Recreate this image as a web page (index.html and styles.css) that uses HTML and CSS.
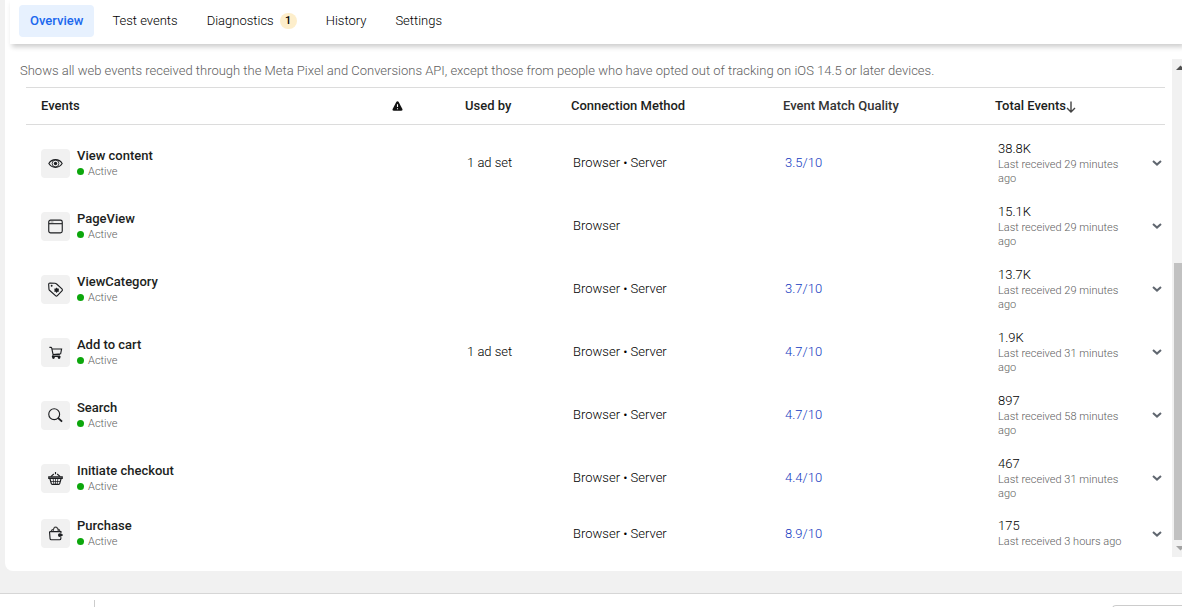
FILE: index.html
```html
<!DOCTYPE html>
<html lang="en">
<head>
  <meta charset="UTF-8">
  <meta name="viewport" content="width=device-width, initial-scale=1.0">
  <title>Events Manager</title>
  <link rel="stylesheet" href="styles.css">
</head>
<body>
  <main class="card">
    <nav class="tabs">
      <a class="tab active" href="#overview">Overview</a>
      <a class="tab" href="#test">Test events</a>
      <a class="tab" href="#diagnostics">Diagnostics <span class="count">1</span></a>
      <a class="tab" href="#history">History</a>
      <a class="tab" href="#settings">Settings</a>
    </nav>

    <div class="panel">
      <section class="content">
        <p class="intro">Shows all web events received through the Meta Pixel and Conversions API, except those from people who have opted out of tracking on iOS 14.5 or later devices.</p>
        <table class="events">
          <colgroup>
            <col>
            <col class="col-warning">
            <col class="col-used">
            <col class="col-method">
            <col class="col-quality">
            <col class="col-total">
            <col class="col-toggle">
          </colgroup>
          <thead>
            <tr>
              <th>Events</th>
              <th class="warning"><svg width="11" height="12" viewBox="0 0 12 12" aria-label="Warnings"><path d="M6 .8c.6 0 1 .3 1.300.8l4 7.600c.5 1-.1 1.900-1.200 1.900H1.900C.8 11.100.2 10.200.7 9.200l4-7.600C5 1.100 5.400.8 6 .8z" fill="#111"/><path d="M6 4v3.200M6 8.400v1.200" stroke="#fff" stroke-width="1.200"/></svg></th>
              <th>Used by</th>
              <th>Connection Method</th>
              <th class="soft">Event Match Quality</th>
              <th>Total Events<svg class="sort" width="10" height="12" viewBox="0 0 10 12"><path d="M5 .5v10.500M1 7l4 4 4-4" fill="none" stroke="#444" stroke-width="1.400"/></svg></th>
              <th></th>
            </tr>
          </thead>
          <tbody>
            <tr>
              <td><div class="event"><span class="icon"><svg viewBox="0 0 16 16"><path d="M.9 8C2.500 5.300 5 3.900 8 3.900s5.500 1.400 7.100 4.100c-1.600 2.700-4.100 4.100-7.100 4.100S2.500 10.700.9 8z"/><circle cx="8" cy="8" r="3.600" stroke-width=".9"/><circle class="dot" cx="8" cy="8" r="1.800"/></svg></span><div><div class="name">View content</div><div class="status">Active</div></div></div></td>
              <td></td>
              <td>1 ad set</td>
              <td>Browser • Server</td>
              <td><a href="#quality">3.5/10</a></td>
              <td class="received"><div>38.8K</div><div class="last">Last received 29 minutes ago</div></td>
              <td class="toggle"><button type="button" aria-label="Expand View content"><svg viewBox="0 0 12 8"><path d="M2 2l4 3.600L10 2"/></svg></button></td>
            </tr>
            <tr>
              <td><div class="event"><span class="icon"><svg viewBox="0 0 16 16"><rect x=".8" y="1.200" width="14.400" height="13.600" rx="2"/><path d="M1 5h14"/><path d="M2.800 3.200h3" stroke="#999"/></svg></span><div><div class="name">PageView</div><div class="status">Active</div></div></div></td>
              <td></td>
              <td></td>
              <td>Browser</td>
              <td></td>
              <td class="received"><div>15.1K</div><div class="last">Last received 29 minutes ago</div></td>
              <td class="toggle"><button type="button" aria-label="Expand PageView"><svg viewBox="0 0 12 8"><path d="M2 2l4 3.600L10 2"/></svg></button></td>
            </tr>
            <tr>
              <td><div class="event"><span class="icon"><svg viewBox="0 0 16 16"><path d="M.7 2.500c0-.8.500-1.300 1.300-1.300l5.500.1c.6 0 1 .2 1.400.6l6 5.500c.6.600.6 1.400 0 2l-4.900 5.100c-.6.600-1.400.6-2 0L1.600 8.800c-.4-.4-.6-.8-.6-1.400z"/><circle class="dot" cx="3.900" cy="4" r="1"/><path class="dot" d="M9.200 5.800l.9 1.200 1.700.1-.5 1.600.7 1.500-1.800.2-1 1.400-1-1.400-1.800-.2.7-1.500-.5-1.600 1.700-.1z"/></svg></span><div><div class="name">ViewCategory</div><div class="status">Active</div></div></div></td>
              <td></td>
              <td></td>
              <td>Browser • Server</td>
              <td><a href="#quality">3.7/10</a></td>
              <td class="received"><div>13.7K</div><div class="last">Last received 29 minutes ago</div></td>
              <td class="toggle"><button type="button" aria-label="Expand ViewCategory"><svg viewBox="0 0 12 8"><path d="M2 2l4 3.600L10 2"/></svg></button></td>
            </tr>
            <tr>
              <td><div class="event"><span class="icon"><svg viewBox="0 0 16 16"><path d="M1.500 2.500h1.700c.4 0 .6.300.7.600l1.600 7.400h7.300M4.200 4.200h10.300l-1 5.200-8.200.8M5.500 10.500l-.7 1.800h8.500"/><circle class="dot" cx="5.800" cy="13.400" r="1.400"/><circle class="dot" cx="11.800" cy="13.400" r="1.400"/></svg></span><div><div class="name">Add to cart</div><div class="status">Active</div></div></div></td>
              <td></td>
              <td>1 ad set</td>
              <td>Browser • Server</td>
              <td><a href="#quality">4.7/10</a></td>
              <td class="received"><div>1.9K</div><div class="last">Last received 31 minutes ago</div></td>
              <td class="toggle"><button type="button" aria-label="Expand Add to cart"><svg viewBox="0 0 12 8"><path d="M2 2l4 3.600L10 2"/></svg></button></td>
            </tr>
            <tr>
              <td><div class="event"><span class="icon"><svg viewBox="0 0 16 16"><circle cx="6.600" cy="6.600" r="5.800"/><path d="M10.500 10.300l1.500 1.400"/><path d="M11.500 11.300l3.500 3.300" stroke-width="2"/></svg></span><div><div class="name">Search</div><div class="status">Active</div></div></div></td>
              <td></td>
              <td></td>
              <td>Browser • Server</td>
              <td><a href="#quality">4.7/10</a></td>
              <td class="received"><div>897</div><div class="last">Last received 58 minutes ago</div></td>
              <td class="toggle"><button type="button" aria-label="Expand Search"><svg viewBox="0 0 12 8"><path d="M2 2l4 3.600L10 2"/></svg></button></td>
            </tr>
            <tr>
              <td><div class="event"><span class="icon"><svg viewBox="0 0 16 16"><path d="M3 6l3.200-2.800M13 6L9.800 3.200M8 1v2.400"/><path d="M.8 6.200h14.400v1.600H.8zM2 8l1.600 5.600c.1.500.4.700.9.700h7c.5 0 .8-.2.9-.7L14 8"/><path d="M3 11.200h10M5.500 8l.7 6M10.500 8l-.7 6M8 8v6" stroke-width=".8"/></svg></span><div><div class="name">Initiate checkout</div><div class="status">Active</div></div></div></td>
              <td></td>
              <td></td>
              <td>Browser • Server</td>
              <td><a href="#quality">4.4/10</a></td>
              <td class="received"><div>467</div><div class="last">Last received 31 minutes ago</div></td>
              <td class="toggle"><button type="button" aria-label="Expand Initiate checkout"><svg viewBox="0 0 12 8"><path d="M2 2l4 3.600L10 2"/></svg></button></td>
            </tr>
            <tr>
              <td><div class="event"><span class="icon"><svg viewBox="0 0 16 16"><path d="M1.600 6h12.200v2M1.600 6l.6 7.400c.1.800.5 1.200 1.300 1.200h8.900c.8 0 1.200-.4 1.300-1.200l.1-1.500"/><path d="M3.600 5.500c.2-1.500 1.300-2.200 2.500-2M5.500 5.600C5.700 2.800 6.500 1.200 8 1.200s2.800 1.600 3 4.400M10.500 3.300c1.200-.1 2 .9 2.200 2.200" stroke="#444"/><circle class="dot" cx="12.600" cy="9.600" r="2"/><circle class="dot" cx="14.600" cy="9.600" r="1.200"/></svg></span><div><div class="name">Purchase</div><div class="status">Active</div></div></div></td>
              <td></td>
              <td></td>
              <td>Browser • Server</td>
              <td><a href="#quality">8.9/10</a></td>
              <td class="received"><div>175</div><div class="last">Last received 3 hours ago</div></td>
              <td class="toggle"><button type="button" aria-label="Expand Purchase"><svg viewBox="0 0 12 8"><path d="M2 2l4 3.600L10 2"/></svg></button></td>
            </tr>
          </tbody>
        </table>
      </section>

      <div class="scrollbar">
        <svg class="arrow" width="17" height="17" viewBox="0 0 17 17"><path d="M4 11h9L8.500 6.500z" fill="#505050"/></svg>
        <div class="thumb"></div>
        <svg class="arrow" width="17" height="17" viewBox="0 0 17 17"><path d="M4 6h9l-4.500 4.500z" fill="#a3a3a3"/></svg>
      </div>
    </div>
  </main>

  <footer class="bottom">
    <div class="divider"></div>
    <div class="box"></div>
  </footer>
</body>
</html>
```

FILE: styles.css
```css
* {
  box-sizing: border-box;
}
body {
  margin: 0;
  height: 100vh;
  display: flex;
  flex-direction: column;
  overflow: hidden;
  background-color: #f1f1f1;
  font-family: Roboto, "Liberation Sans", sans-serif;
  font-size: 13px;
  font-weight: 300;
  line-height: 16px;
  color: #000;
}
a {
  color: #1238c0;
  text-decoration: none;
}
.card {
  flex: none;
  margin-left: 5px;
  background-color: #fff;
  border-bottom-left-radius: 8px;
  overflow: hidden;
}

/* Tabs */
.tabs {
  display: flex;
  gap: 7px;
  height: 44px;
  margin-left: 5px;
  padding: 5px 9px 7px;
  box-shadow: 2px 3px 5px rgba(0, 0, 0, 0.2);
}
.tab {
  display: flex;
  align-items: center;
  padding: 0 11px;
  border-radius: 4px;
  color: #000;
}
.tab.active {
  background-color: #e7f1fe;
  color: #1b68ee;
  font-weight: 500;
}
.count {
  width: 17px;
  margin-left: 6px;
  border-radius: 8px;
  background-color: #fdeecb;
  font-size: 11px;
  font-weight: 500;
  text-align: center;
}

/* Scrolling panel */
.panel {
  display: flex;
  padding: 15px 0 14px;
}
.content {
  flex: 1;
  min-width: 0;
  padding: 4px 7px 0 15px;
}
.intro {
  margin: 0 0 8px;
  color: #606060;
}
.scrollbar {
  flex: none;
  display: flex;
  flex-direction: column;
  justify-content: space-between;
  width: 10px;
  overflow: hidden;
  background-color: #f1f1f1;
}
.arrow {
  flex: none;
}
.thumb {
  height: 277px;
  margin: auto 0 0 2px;
  background-color: #c1c1c1;
}

/* Events table */
.events {
  width: calc(100% - 6px);
  margin-left: 6px;
  border-collapse: collapse;
  table-layout: fixed;
}
.col-warning { width: 68px; }
.col-used { width: 106px; }
.col-method { width: 212px; }
.col-quality { width: 212px; }
.col-total { width: 157px; }
.col-toggle { width: 28px; }
th {
  height: 37px;
  padding: 0 0 1px 15px;
  border-top: 1px solid #dcdcdc;
  border-bottom: 1px solid #dcdcdc;
  color: #1c1e21;
  font-weight: 500;
  text-align: left;
  white-space: nowrap;
}
th.warning {
  padding-left: 10px;
}
th.soft {
  color: #333;
}
th svg {
  display: block;
}
th .sort {
  display: inline-block;
  vertical-align: -3px;
}
td {
  padding: 8px 10px 10px 17px;
}
td:first-child {
  padding: 9px 10px 9px 15px;
}
td.received {
  padding: 9px 9px 9px 18px;
}
tr:last-child td {
  padding-top: 8px;
  padding-bottom: 8px;
}
tbody::before {
  content: "";
  display: block;
  height: 7px;
}
.event {
  display: flex;
  align-items: center;
  gap: 7px;
}
.icon {
  display: flex;
  align-items: center;
  justify-content: center;
  width: 29px;
  height: 29px;
  border-radius: 4px;
  background-color: #f1f1f1;
}
.icon svg {
  width: 15px;
  height: 15px;
  fill: none;
  stroke: #1c1e21;
  stroke-width: 1.2;
}
.icon .dot {
  fill: #1c1e21;
  stroke: none;
}
.name {
  color: #1c1e21;
  font-weight: 500;
}
.status {
  display: flex;
  align-items: center;
  gap: 4px;
  margin-top: 1px;
  font-size: 11px;
  line-height: 14px;
  color: #606060;
}
.status::before {
  content: "";
  width: 7px;
  height: 7px;
  margin-bottom: 1px;
  border-radius: 50%;
  background-color: #0ca70c;
}
.last {
  margin-top: 1px;
  font-size: 11px;
  line-height: 14px;
  color: #606060;
}
td.toggle {
  padding: 0 2px 2px 0;
}
.toggle button {
  display: block;
  margin-left: auto;
  padding: 0;
  border: none;
  background: none;
  cursor: pointer;
}
.toggle svg {
  display: block;
  width: 12px;
  height: 8px;
  fill: none;
  stroke: #606770;
  stroke-width: 2;
}

/* Bottom bar */
.bottom {
  flex: 1;
  display: flex;
  justify-content: space-between;
  margin-top: 22px;
  border-top: 1px solid #d6d6d6;
  background-color: #fff;
}
.divider {
  margin: 6px 0 0 94px;
  border-left: 1px solid #ccc;
}
.box {
  width: 70px;
  height: 30px;
  margin-top: 11px;
  border: 1px solid #ccc;
  border-right: none;
  border-top-left-radius: 4px;
}
```
